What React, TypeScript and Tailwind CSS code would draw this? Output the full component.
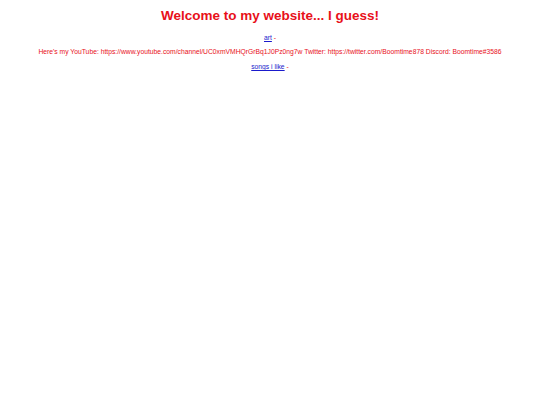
export default function App() {
  return (
    <div className="min-h-[405px] bg-white text-center font-['Liberation_Sans',Arial,sans-serif] text-[#e8101a]">
      <h1 className="pt-[8px] text-[13.5px] font-bold leading-[16px]">Welcome to my website... I guess!</h1>
      <p className="mt-[9px] text-[6.75px] leading-[9px]">
        <a href="#" className="text-[#1a1acc] underline">art</a> -
      </p>
      <p className="mt-[5px] text-[6.75px] leading-[9px]">
        Here's my YouTube: https://www.youtube.com/channel/UC0xmVMHQrGrBq1J0Pz0ng7w Twitter: https://twitter.com/Boomtime878 Discord: Boomtime#3586
      </p>
      <p className="mt-[6px] text-[6.75px] leading-[9px]">
        <a href="#" className="text-[#1a1acc] underline">songs i like</a> -
      </p>
    </div>
  );
}
